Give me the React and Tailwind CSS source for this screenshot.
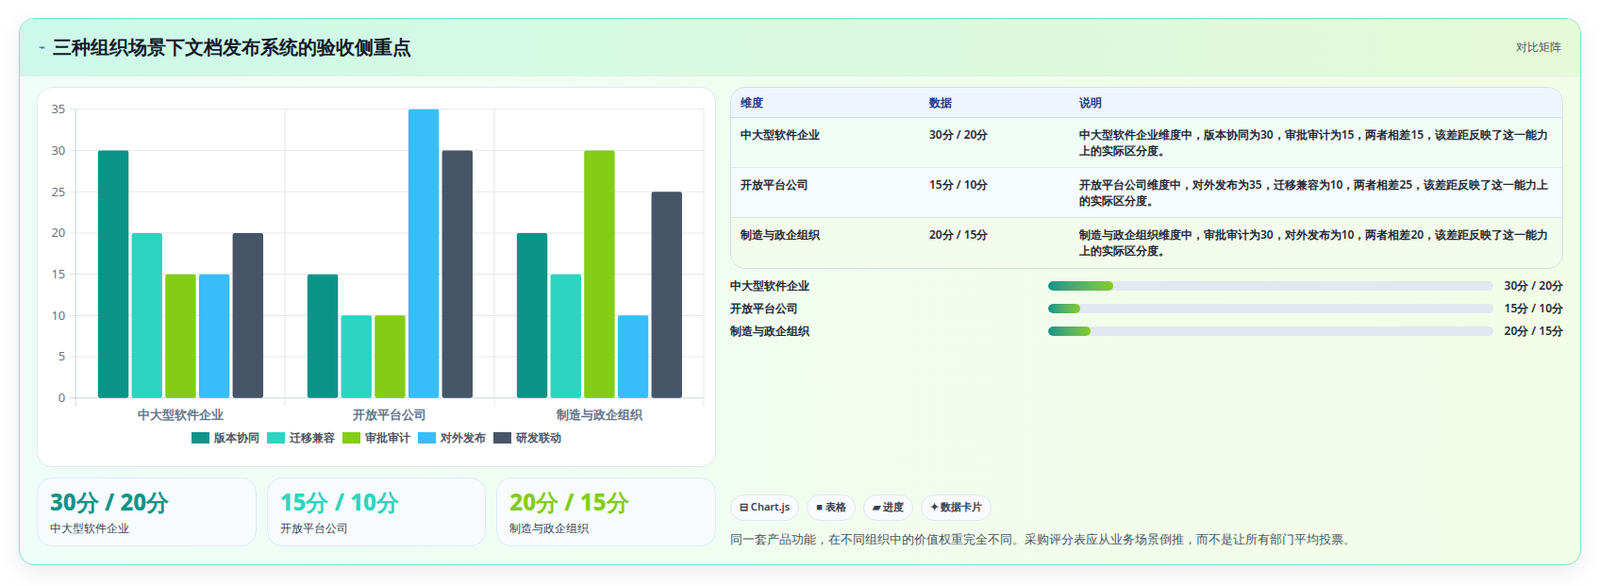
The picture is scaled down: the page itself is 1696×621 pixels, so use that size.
const groups = [
  { name: "中大型软件企业", values: [30, 20, 15, 15, 20] },
  { name: "开放平台公司", values: [15, 10, 10, 35, 30] },
  { name: "制造与政企组织", values: [20, 15, 30, 10, 25] },
];
const series = [
  { name: "版本协同", color: "#0d9488" },
  { name: "迁移兼容", color: "#2dd4bf" },
  { name: "审批审计", color: "#84cc16" },
  { name: "对外发布", color: "#38bdf8" },
  { name: "研发联动", color: "#475569" },
];
const rows = [
  { name: "中大型软件企业", data: "30分 / 20分", desc: "中大型软件企业维度中，版本协同为30，审批审计为15，两者相差15，该差距反映了这一能力上的实际区分度。", pct: 14.7, bg: "bg-[#f0fdf7]" },
  { name: "开放平台公司", data: "15分 / 10分", desc: "开放平台公司维度中，对外发布为35，迁移兼容为10，两者相差25，该差距反映了这一能力上的实际区分度。", pct: 7.3, bg: "bg-[#f6fbfb]" },
  { name: "制造与政企组织", data: "20分 / 15分", desc: "制造与政企组织维度中，审批审计为30，对外发布为10，两者相差20，该差距反映了这一能力上的实际区分度。", pct: 9.6, bg: "bg-[#f2fbec]" },
];
const stats = [
  { v: "30分 / 20分", l: "中大型软件企业", c: "text-[#0d9488]" },
  { v: "15分 / 10分", l: "开放平台公司", c: "text-[#2dd4bf]" },
  { v: "20分 / 15分", l: "制造与政企组织", c: "text-[#84cc16]" },
];

function Chart() {
  const x0 = 38, x1 = 654, yTop = 21, y0 = 304;
  const unit = (y0 - yTop) / 35;
  const gw = (x1 - x0) / 3;
  return (
    <svg width="720" height="357" viewBox="0 0 666 330" className="block">
      {[0, 5, 10, 15, 20, 25, 30, 35].map((t) => {
        const y = y0 - t * unit;
        return (
          <g key={t}>
            <line x1={x0 - 6} x2={x1} y1={y} y2={y} stroke={t === 0 ? "#cbd5e1" : "#e5e7eb"} />
            <text x={x0 - 10} y={y + 4} textAnchor="end" fontSize="12" fill="#6b7280">{t}</text>
          </g>
        );
      })}
      {[0, 1, 2, 3].map((i) => (
        <line key={i} x1={x0 + i * gw} x2={x0 + i * gw} y1={yTop} y2={y0 + 8} stroke={i === 0 ? "#cbd5e1" : "#e5e7eb"} />
      ))}
      {groups.map((g, gi) =>
        g.values.map((v, si) => (
          <rect key={gi + "-" + si} x={x0 + gi * gw + 22 + si * 33} y={y0 - v * unit} width="30" height={v * unit} rx="2" fill={series[si].color} />
        ))
      )}
      {groups.map((g, gi) => (
        <text key={g.name} x={x0 + gi * gw + gw / 2} y={325} textAnchor="middle" fontSize="12" fontWeight="600" fill="#64748b">{g.name}</text>
      ))}
    </svg>
  );
}

export default function App() {
  return (
    <div className="w-[1696px] h-[621px] bg-white pt-[19px] pl-[20px] font-['Noto_Sans_CJK_SC',sans-serif]">
      <div className="w-[1656px] h-[580px] rounded-2xl border border-[#7ee0cf] overflow-hidden flex flex-col shadow-[0_8px_24px_rgba(0,0,0,0.08)] bg-gradient-to-r from-[#effdf8] to-[#f3fce6]">
        <div className="h-[61px] shrink-0 flex items-center justify-between px-[20px] bg-gradient-to-r from-[#cdf8ea] to-[#e5fad6] border-b border-[#d9f3ea]">
          <div className="flex items-center gap-2">
            <span className="text-[#2563eb] text-xs">⌁</span>
            <h1 className="text-[19.5px] font-bold text-[#111827]">三种组织场景下文档发布系统的验收侧重点</h1>
          </div>
          <span className="text-[12px] text-[#4b5563]">对比矩阵</span>
        </div>
        <div className="flex-1 flex gap-[15px] pt-[11px] px-[18px] pb-[17px]">
          <div className="w-[720px] flex flex-col gap-[11px]">
            <div className="h-[403px] bg-white rounded-2xl border border-[#e2e8f0] flex flex-col items-center">
              <Chart />
              <div className="flex gap-[8px] mt-[5px] text-[12px] font-semibold text-[#4b5563]">
                {series.map((s) => (
                  <div key={s.name} className="flex items-center gap-[5px]">
                    <span className="w-[19px] h-[12px]" style={{ background: s.color }} />
                    {s.name}
                  </div>
                ))}
              </div>
            </div>
            <div className="grid grid-cols-3 gap-[11px]">
              {stats.map((s) => (
                <div key={s.l} className="h-[73px] rounded-2xl border border-[#dbeafe] bg-[#f7fbfd] px-[13px] pt-[10px]">
                  <div className={"text-[24px] font-extrabold leading-[30px] " + s.c}>{s.v}</div>
                  <div className="text-[12px] text-[#374151] mt-[4px]">{s.l}</div>
                </div>
              ))}
            </div>
          </div>
          <div className="flex-1 flex flex-col justify-between">
            <div>
              <div className="rounded-2xl border border-[#cfe0e6] overflow-hidden text-[12px]">
                <div className="flex h-[32px] items-center bg-[#eef5fd] border-b border-[#cfdbe6] font-semibold text-[#1e3a8a]">
                  <div className="w-[210px] pl-[10px]">维度</div>
                  <div className="w-[159px]">数据</div>
                  <div className="flex-1">说明</div>
                </div>
                {rows.map((r, i) => (
                  <div key={r.name} className={"flex min-h-[53px] py-[9px] font-semibold text-[#1f2937] " + r.bg + (i < 2 ? " border-b border-[#dfe7ea]" : "")}>
                    <div className="w-[210px] pl-[10px]">{r.name}</div>
                    <div className="w-[159px]">{r.data}</div>
                    <div className="flex-1 pr-[12px] leading-[17px]">{r.desc}</div>
                  </div>
                ))}
              </div>
              <div className="mt-[9px] flex flex-col gap-[7px] text-[12px] font-semibold text-[#1f2937]">
                {rows.map((r) => (
                  <div key={r.name} className="flex items-center h-[17px]">
                    <div className="w-[337px]">{r.name}</div>
                    <div className="w-[472px] h-[10px] rounded-full bg-[#e2e8f0] overflow-hidden">
                      <div className="h-full rounded-full bg-gradient-to-r from-[#0d9488] to-[#84cc16]" style={{ width: r.pct + "%" }} />
                    </div>
                    <div className="flex-1 text-right">{r.data}</div>
                  </div>
                ))}
              </div>
            </div>
            <div>
              <div className="flex gap-[8px] text-[11px] font-semibold text-[#374151]">
                {["⊟ Chart.js", "■ 表格", "▰ 进度", "✦ 数据卡片"].map((c) => (
                  <span key={c} className="h-[28px] px-[9px] flex items-center rounded-full border border-[#e2e8f0] bg-[#f8fafc]">{c}</span>
                ))}
              </div>
              <p className="mt-[10px] text-[13px] text-[#4b5563]">同一套产品功能，在不同组织中的价值权重完全不同。采购评分表应从业务场景倒推，而不是让所有部门平均投票。</p>
            </div>
          </div>
        </div>
      </div>
    </div>
  );
}
